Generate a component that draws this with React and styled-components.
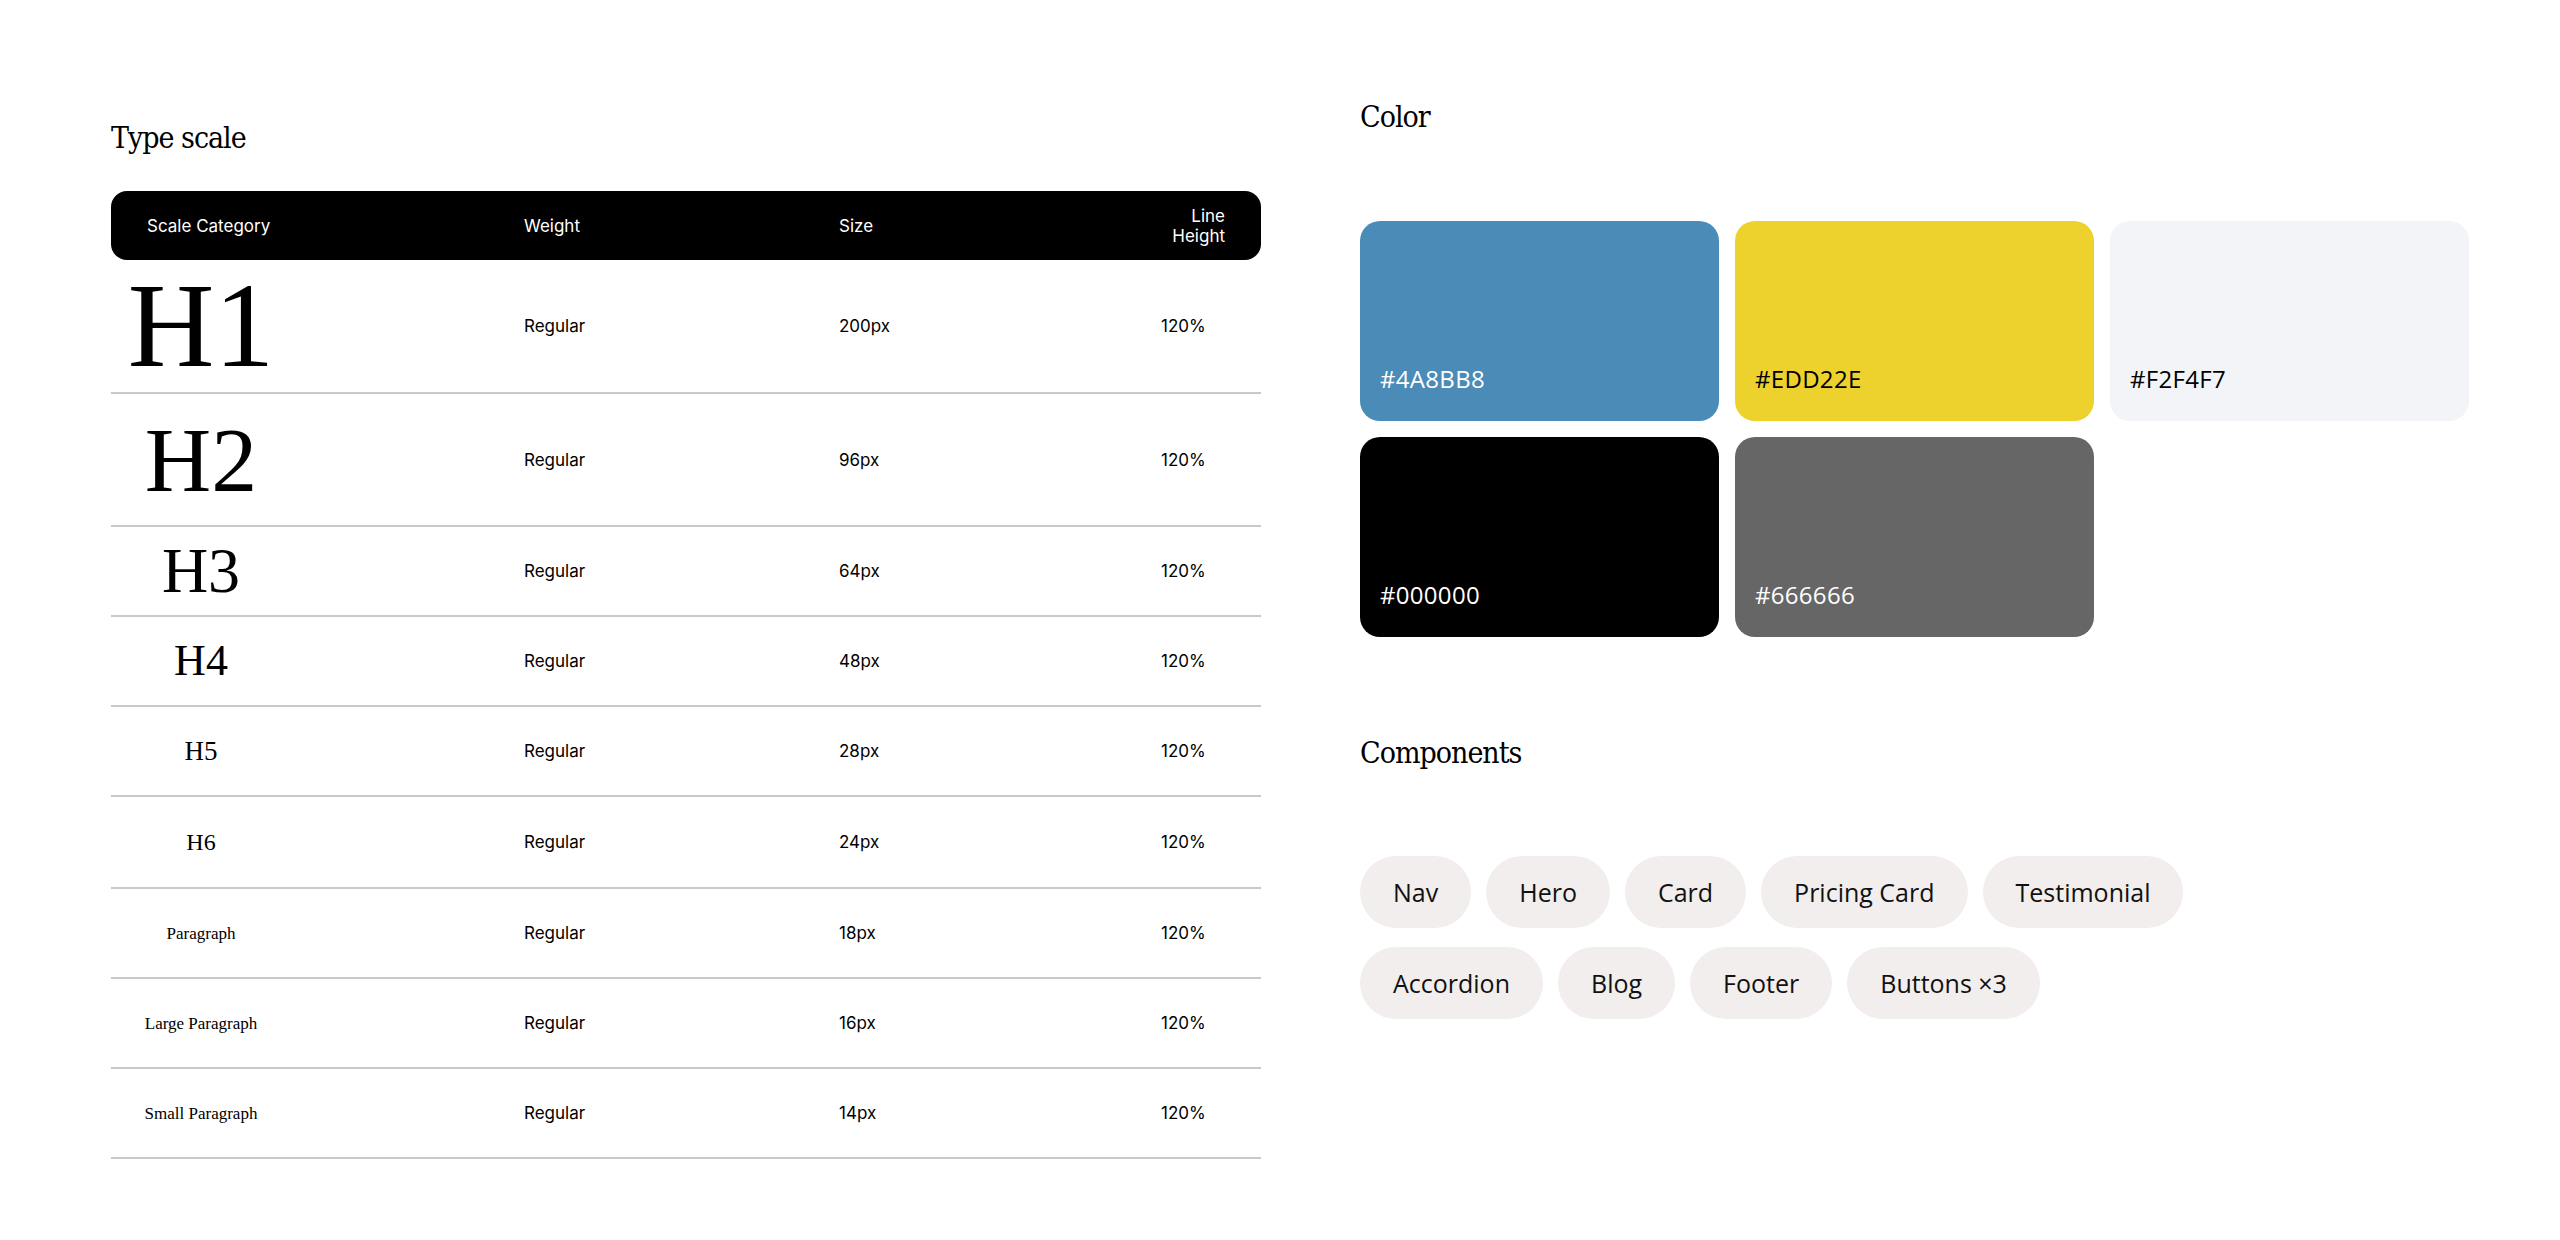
import React from "react";
import styled, { createGlobalStyle } from "styled-components";

const Global = createGlobalStyle`
  body { margin: 0; background: #fff; color: #000; }
`;

const Page = styled.div`
  display: flex;
  gap: 99px;
  padding: 0 0 0 111px;
  width: 2560px;
  box-sizing: border-box;
`;

const Left = styled.section`
  width: 1150px;
  padding-top: 118px;
`;

const Right = styled.section`
  width: 1110px;
  padding-top: 97px;
`;

const Title = styled.h2`
  margin: 0;
  font-family: "DejaVu Serif Condensed", "Liberation Serif", serif;
  font-stretch: condensed;
  font-weight: 400;
  font-size: 30px;
  line-height: 40px;
  letter-spacing: -1px;
`;

const Table = styled.div`
  margin-top: 33px;
  font-family: Inter, "Liberation Sans", sans-serif;
`;

const Row = styled.div`
  display: grid;
  grid-template-columns: 413px 315px 322px 1fr;
  align-items: center;
  height: ${(p) => p.$h}px;
  border-bottom: 2px solid #c9c9c9;
  font-size: 17px;
`;

const Head = styled(Row)`
  background: #000;
  color: #fff;
  border-radius: 16px;
  border-bottom: none;
  height: 69px;
  font-size: 17px;
`;

const HeadFirst = styled.div`
  padding-left: 36px;
`;

const HeadLast = styled.div`
  text-align: right;
  padding-right: 36px;
`;

const Cat = styled.div`
  width: 180px;
  text-align: center;
  font-family: "Liberation Serif", serif;
  font-size: ${(p) => p.$size}px;
  line-height: 1;
`;

const Swatches = styled.div`
  margin-top: 84px;
  display: grid;
  grid-template-columns: repeat(3, 359px);
  grid-auto-rows: 200px;
  gap: 16px;
`;

const Swatch = styled.div`
  background: ${(p) => p.$bg};
  color: ${(p) => p.$fg};
  border-radius: 20px;
  display: flex;
  align-items: flex-end;
  padding: 0 20px 26px;
  font-family: "Open Sans", "Noto Sans", sans-serif;
  font-size: 24px;
  letter-spacing: 0.3px;
`;

const CompTitle = styled(Title)`
  margin-top: 96px;
`;

const Chips = styled.div`
  margin-top: 83px;
  display: flex;
  flex-direction: column;
  gap: 19px;
`;

const ChipRow = styled.div`
  display: flex;
  gap: 15px;
`;

const Chip = styled.div`
  height: 72px;
  padding: 0 33px;
  border-radius: 36px;
  background: #f1eeed;
  display: flex;
  align-items: center;
  font-family: "Open Sans", "Noto Sans", sans-serif;
  font-size: 25px;
  color: #111;
`;

const rows = [
  ["H1", 120, 132, "200px"],
  ["H2", 92, 131, "96px"],
  ["H3", 64, 88, "64px"],
  ["H4", 44, 88, "48px"],
  ["H5", 27, 88, "28px"],
  ["H6", 24, 90, "24px"],
  ["Paragraph", 17, 88, "18px"],
  ["Large Paragraph", 17, 88, "16px"],
  ["Small Paragraph", 17, 88, "14px"],
];

const colors = [
  ["#4A8BB8", "#4a8bb8", "#fff"],
  ["#EDD22E", "#edd22e", "#000"],
  ["#F2F4F7", "#f2f4f7", "#000"],
  ["#000000", "#000000", "#fff"],
  ["#666666", "#666666", "#fff"],
];

export default function App() {
  return (
    <>
      <Global />
      <Page>
        <Left>
          <Title>Type scale</Title>
          <Table>
            <Head>
              <HeadFirst>Scale Category</HeadFirst>
              <div>Weight</div>
              <div>Size</div>
              <HeadLast>Line Height</HeadLast>
            </Head>
            {rows.map(([name, fs, h, size]) => (
              <Row key={name} $h={h}>
                <Cat $size={fs}>{name}</Cat>
                <div>Regular</div>
                <div>{size}</div>
                <div>120%</div>
              </Row>
            ))}
          </Table>
        </Left>
        <Right>
          <Title>Color</Title>
          <Swatches>
            {colors.map(([t, bg, fg]) => (
              <Swatch key={t} $bg={bg} $fg={fg}>{t}</Swatch>
            ))}
          </Swatches>
          <CompTitle>Components</CompTitle>
          <Chips>
            <ChipRow>
              {["Nav", "Hero", "Card", "Pricing Card", "Testimonial"].map((c) => <Chip key={c}>{c}</Chip>)}
            </ChipRow>
            <ChipRow>
              {["Accordion", "Blog", "Footer", "Buttons ×3"].map((c) => <Chip key={c}>{c}</Chip>)}
            </ChipRow>
          </Chips>
        </Right>
      </Page>
    </>
  );
}
